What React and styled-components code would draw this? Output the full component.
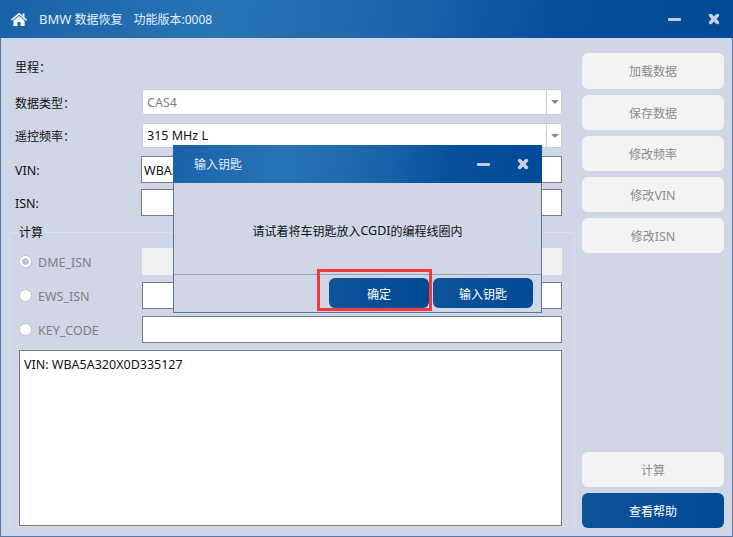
import React from "react";
import styled, { createGlobalStyle } from "styled-components";

const Global = createGlobalStyle`
  html, body { margin: 0; padding: 0; width: 733px; height: 537px; overflow: hidden; background: #cfd6e6; }
  * { box-sizing: border-box; }
  body { font-family: "Noto Sans", "Noto Sans CJK SC", sans-serif; font-size: 12px; color: #111; }
`;

const Win = styled.div`
  position: relative;
  width: 733px;
  height: 537px;
  display: flex;
  flex-direction: column;
  background: #cfd6e6;
  border: 1px solid #5a77a6;
  border-top: 0;
`;

const headerBg = `linear-gradient(100deg, #1a62a8 0%, #2775b6 30%, #1c64aa 55%, #064f9b 75%, #004a98 100%)`;

const TitleBar = styled.div`
  height: 38px;
  flex: none;
  display: flex;
  align-items: center;
  background: ${headerBg};
  color: #e6edf7;
  font-size: 12px;
  padding-left: 11px;
  margin: 0 -1px;
`;
const HomeIcon = styled.svg`
  width: 16px;
  height: 14px;
  margin-right: 12px;
  fill: #fff;
`;
const TitleText = styled.span`
  margin-right: 11px;
  white-space: nowrap;
`;
const Lat = styled.span`
  font-size: ${(p) => p.$size || 12.5}px;
`;
const TitleControls = styled.div`
  margin-left: auto;
  display: flex;
  align-items: center;
  gap: 27px;
  padding-right: 13px;
`;
const MinIcon = styled.span`
  display: block;
  width: 13px;
  height: 3px;
  border-radius: 1px;
  background: #c3cbde;
`;
const CloseIcon = styled.svg`
  display: block;
  width: 12px;
  height: 12px;
`;

const Main = styled.div`
  flex: 1;
  display: flex;
  min-height: 0;
`;
const Left = styled.div`
  width: 581px;
  padding: 15px 0 0 14px;
  display: flex;
  flex-direction: column;
`;
const Right = styled.div`
  width: 142px;
  padding: 15px 0 8px;
  display: flex;
  flex-direction: column;
  gap: 6px;
`;
const Spacer = styled.div`
  flex: 1;
`;
const SideBtn = styled.button`
  height: ${(p) => p.$h || 35}px;
  flex: none;
  width: 142px;
  border: 0;
  border-radius: 6px;
  font: inherit;
  padding: 0;
  color: ${(p) => (p.$primary ? "#fff" : "#8d8d8d")};
  background: ${(p) => (p.$primary ? "linear-gradient(90deg,#0f5399,#004a96)" : "#f3f3f3")};
`;

const Row = styled.div`
  display: flex;
  align-items: center;
  height: ${(p) => p.$h || 27}px;
  margin-bottom: ${(p) => p.$mb ?? 7}px;
  width: 547px;
`;
const Label = styled.div`
  width: ${(p) => p.$w || 126}px;
  flex: none;
  white-space: nowrap;
  color: #111;
  padding-top: 2px;
`;
const Combo = styled.div`
  flex: 1;
  height: 100%;
  background: #fff;
  border-radius: 3px;
  display: flex;
  align-items: center;
  padding: 1px 0 0 5px;
  font-size: 12.5px;
  color: ${(p) => (p.$dim ? "#808080" : "#111")};
  box-shadow: inset 0 0 0 1px #c6cedc;
`;
const ComboText = styled.span`
  flex: 1;
`;
const ComboArrow = styled.span`
  width: 16px;
  height: 100%;
  flex: none;
  border-left: 1px solid #c6cedc;
  display: flex;
  align-items: center;
  justify-content: center;
  &::after {
    content: "";
    border-left: 4px solid transparent;
    border-right: 4px solid transparent;
    border-top: 4px solid #8b8b8b;
  }
`;
const Input = styled.div`
  flex: 1;
  height: 100%;
  background: ${(p) => (p.$disabled ? "#efefef" : "#fff")};
  border: 1px solid ${(p) => (p.$disabled ? "#f3f3f3" : "#7a7a7a")};
  padding: 1px 0 0 2px;
  display: flex;
  align-items: center;
  font-size: 12.5px;
  color: #111;
`;
const Group = styled.div`
  position: relative;
  margin: 9px 0 9px -6px;
  width: 566px;
  flex: 1;
  border: 1px solid #dcdfe6;
  border-radius: 2px 2px 0 0;
  padding: 15px 0 0 9px;
  display: flex;
  flex-direction: column;
`;
const GroupTitle = styled.div`
  position: absolute;
  top: -8px;
  left: 8px;
  padding: 0 1px;
  line-height: 16px;
  background: #cfd6e6;
`;
const CalcRow = styled.div`
  display: flex;
  align-items: center;
  height: 27px;
  margin-bottom: 7px;
  width: 543px;
`;
const RadioLabel = styled.label`
  width: 123px;
  flex: none;
  display: flex;
  align-items: center;
  color: #7f7f7f;
  font-size: 12.5px;
`;
const RadioText = styled.span`
  padding-top: 2px;
`;
const Radio = styled.span`
  width: 13px;
  height: 13px;
  border-radius: 50%;
  background: #fff;
  border: 1px solid #bcc3d2;
  margin-right: 6px;
  display: flex;
  align-items: center;
  justify-content: center;
  &::after {
    content: "";
    display: ${(p) => (p.$on ? "block" : "none")};
    width: 7px;
    height: 7px;
    border-radius: 50%;
    background: #c4c4c4;
  }
`;
const Log = styled.div`
  width: 543px;
  height: 176px;
  flex: none;
  background: #fff;
  border: 1px solid #7a7a7a;
  padding: 5px 4px;
  font-size: 12.5px;
`;

const Dialog = styled.div`
  position: absolute;
  left: 172px;
  top: 145px;
  width: 369px;
  height: 168px;
  background: #cfd6e6;
  border: 1px solid #5f7398;
  border-top: 0;
  display: flex;
  flex-direction: column;
`;
const DialogTitle = styled.div`
  height: 38px;
  flex: none;
  margin: 0 -1px;
  display: flex;
  align-items: center;
  padding-left: 21px;
  background: ${headerBg};
  color: #e6edf7;
`;
const DialogMsg = styled.div`
  height: 92px;
  flex: none;
  display: flex;
  align-items: center;
  justify-content: center;
  padding-top: 4px;
  color: #111;
  border-bottom: 1px solid #9a9fae;
`;
const DialogFooter = styled.div`
  flex: 1;
  display: flex;
  justify-content: flex-end;
  gap: 4px;
  padding: 3px 8px 0 0;
`;
const DialogBtn = styled.button`
  position: relative;
  width: 100px;
  height: 30px;
  border: 0;
  border-radius: 6px;
  padding: 1px 0 0;
  font: inherit;
  color: #fff;
  background: linear-gradient(90deg, #0f5399, #004a96);
`;
const RedBox = styled.span`
  position: absolute;
  left: -12px;
  top: -9px;
  width: 115px;
  height: 42px;
  border: 3px solid #f23a3c;
  pointer-events: none;
`;

const Home = () => (
  <HomeIcon viewBox="0 0 16 14">
    <path d="M8 .8 0 7.6l.9 1.1L8 2.8l7.1 5.9.9-1.1-2.6-2.2V1.4h-2v2.6z" />
    <path d="M8 4 2.4 8.6V14h4v-4h3.2v4h4V8.6z" />
  </HomeIcon>
);
const X = () => (
  <CloseIcon viewBox="0 0 12 12">
    <path d="M2.6 2.6 9.4 9.4M9.4 2.6 2.6 9.4" stroke="#c9d0e0" strokeWidth="3.6" strokeLinecap="round" />
  </CloseIcon>
);

export default function App() {
  return (
    <>
      <Global />
      <Win>
        <TitleBar>
          <Home />
          <TitleText>
            <Lat $size={13}>BMW</Lat> 数据恢复
          </TitleText>
          <TitleText>功能版本:0008</TitleText>
          <TitleControls>
            <MinIcon />
            <X />
          </TitleControls>
        </TitleBar>
        <Main>
          <Left>
            <Row $mb={9}>
              <Label>里程：</Label>
            </Row>
            <Row $h={26} $mb={8}>
              <Label $w={127}>数据类型：</Label>
              <Combo $dim>
                <ComboText>CAS4</ComboText>
                <ComboArrow />
              </Combo>
            </Row>
            <Row $h={26} $mb={8}>
              <Label $w={127}>遥控频率：</Label>
              <Combo>
                <ComboText>315 MHz L</ComboText>
                <ComboArrow />
              </Combo>
            </Row>
            <Row $mb={6}>
              <Label>
                <Lat>VIN:</Lat>
              </Label>
              <Input>WBA5A320X0D335127</Input>
            </Row>
            <Row>
              <Label>
                <Lat>ISN:</Lat>
              </Label>
              <Input />
            </Row>
            <Group>
              <GroupTitle>计算</GroupTitle>
              <CalcRow>
                <RadioLabel>
                  <Radio $on />
                  <RadioText>DME_ISN</RadioText>
                </RadioLabel>
                <Input $disabled />
              </CalcRow>
              <CalcRow>
                <RadioLabel>
                  <Radio />
                  <RadioText>EWS_ISN</RadioText>
                </RadioLabel>
                <Input />
              </CalcRow>
              <CalcRow>
                <RadioLabel>
                  <Radio />
                  <RadioText>KEY_CODE</RadioText>
                </RadioLabel>
                <Input />
              </CalcRow>
              <Log>VIN: WBA5A320X0D335127</Log>
            </Group>
          </Left>
          <Right>
            <SideBtn $h={36}>加载数据</SideBtn>
            <SideBtn>保存数据</SideBtn>
            <SideBtn>修改频率</SideBtn>
            <SideBtn>
              修改<Lat>VIN</Lat>
            </SideBtn>
            <SideBtn>
              修改<Lat>ISN</Lat>
            </SideBtn>
            <Spacer />
            <SideBtn>计算</SideBtn>
            <SideBtn $primary>查看帮助</SideBtn>
          </Right>
        </Main>
        <Dialog>
          <DialogTitle>
            输入钥匙
            <TitleControls>
              <MinIcon />
              <X />
            </TitleControls>
          </DialogTitle>
          <DialogMsg>
            请试着将车钥匙放入<Lat>CGDI</Lat>的编程线圈内
          </DialogMsg>
          <DialogFooter>
            <DialogBtn>
              确定
              <RedBox />
            </DialogBtn>
            <DialogBtn>输入钥匙</DialogBtn>
          </DialogFooter>
        </Dialog>
      </Win>
    </>
  );
}
